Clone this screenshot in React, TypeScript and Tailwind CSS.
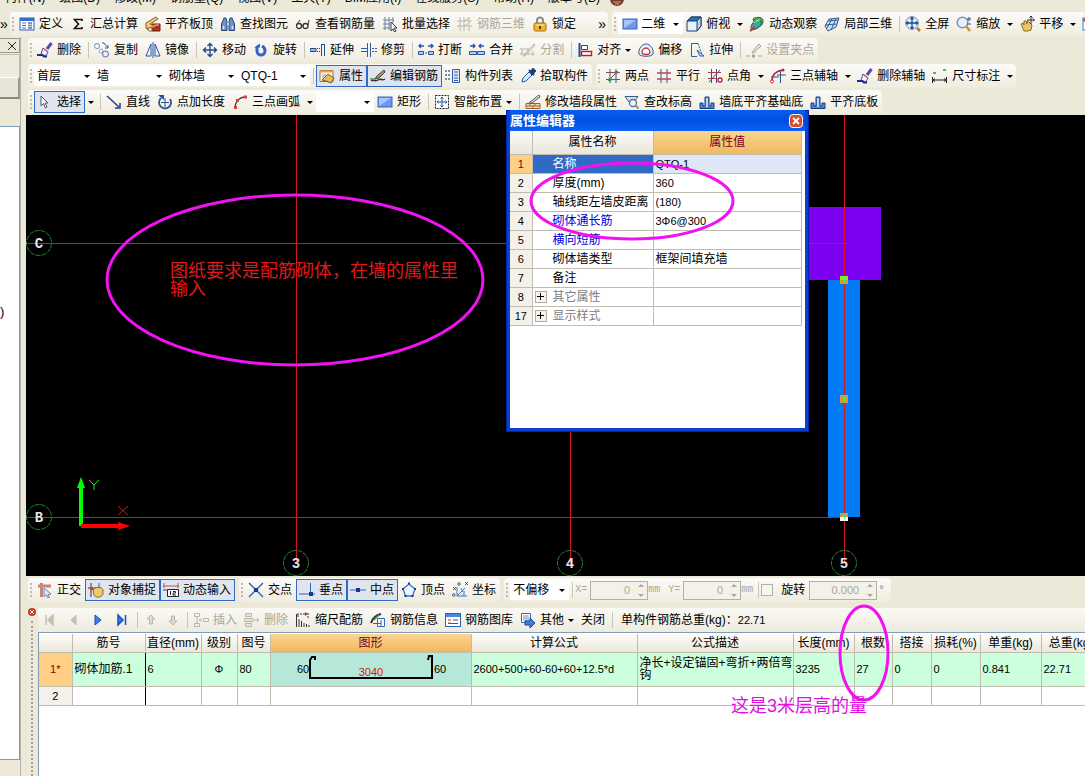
import type { ReactNode } from "react";

/* ─────────── Icons (16x16) ─────────── */
const glyphs: Record<string, ReactNode> = {
  define: (
    <>
      <rect x="1" y="2" width="14" height="12" fill="#fff" stroke="#2f5fae" />
      <path d="M1 3.500h14" stroke="#2f6fd0" strokeWidth="3" />
      <path d="M3 7h4M3 9.500h4M3 12h4" stroke="#4a6fb0" />
      <path d="M9 7h4M9 9.500h4M9 12h4" stroke="#7d93bd" strokeWidth="2" />
    </>
  ),
  sum: <path d="M12 5V3.500H4.500L8.500 8l-4 4.500H12V11" fill="none" stroke="#111" strokeWidth="1.600" />,
  alignTop: (
    <>
      <path d="M7 8h8v7H7z" fill="#b03020" stroke="#6b2015" />
      <path d="M1 7 11 1l2 2-8 5 3 1-5 5-2-2z" fill="#f7c878" stroke="#8a5a20" />
      <path d="m3 13 8-4 3 0" stroke="#f0a060" strokeWidth="1.500" fill="none" />
      <path d="M2 12h5v3H4z" fill="#fff" stroke="#8a5a20" />
    </>
  ),
  find: (
    <>
      <path d="M1.500 14.500V8L4 2h2l1 4v8.500zM14.500 14.500V8L12 2h-2L9 6v8.500z" fill="#6f93c8" stroke="#27477e" />
      <path d="M7 8h2M3.500 10v3M12.500 10v3" stroke="#dbe7fa" strokeWidth="1.500" />
    </>
  ),
  glasses: (
    <>
      <circle cx="4" cy="10" r="2.500" fill="#fff" stroke="#333" strokeWidth="1.300" />
      <circle cx="10.500" cy="10" r="2.500" fill="#fff" stroke="#333" strokeWidth="1.300" />
      <path d="M6.500 9.500h1.500M2 8 5 4M13 9l1-5" stroke="#333" fill="none" />
    </>
  ),
  batch: (
    <>
      <path d="M1 4h11M1 8h7M1 12h7M3 1v13M7 1v13M11 1v6" stroke="#6d7f9e" fill="none" />
      <path d="m9 6 6 6-3 0 2 3-1.500 1L11 13l-2 2z" fill="#fff" stroke="#2d3d5c" />
    </>
  ),
  rebar3d: <path d="M0 5h15M0 10h15M3 1v14M7 1v14M12 1v14M7 5l5-3M7 10l5-3" stroke="#bdb9aa" fill="none" />,
  lock: (
    <>
      <path d="M5 8V4.500a3 3 0 0 1 6 0V8" fill="none" stroke="#8d8d8d" strokeWidth="2" />
      <rect x="2" y="7" width="12" height="8" rx="1.500" fill="#f3b52c" stroke="#a86c10" />
      <path d="M4 9h8" stroke="#fde6a0" />
      <path d="M8 10v3" stroke="#5f3d08" strokeWidth="2" />
    </>
  ),
  plane: (
    <>
      <rect x="1" y="3" width="14" height="10" fill="#6d97ec" stroke="#3c64c0" />
      <path d="M2 4h12L2 12z" fill="#a9c4fb" />
    </>
  ),
  cube: (
    <>
      <path d="M1 5 5 1h10v9l-4 5H1z" fill="#e8f1fb" stroke="#173f6e" />
      <path d="M1 5 5 1h10l-4 4z" fill="#2d6fa8" stroke="#173f6e" />
      <path d="M11 5v10l4-5V1z" fill="#b7d2ea" stroke="#173f6e" />
    </>
  ),
  orbit: (
    <>
      <path d="M4 3c4-3 11-2 10 3s-5 5-7 4z" fill="#45b345" stroke="#186a26" />
      <ellipse cx="7" cy="9" rx="6" ry="3.500" transform="rotate(-40 7 9)" fill="#3aa7a0" stroke="#1d5e7a" />
      <path d="m1 15 5-4" stroke="#c03028" strokeWidth="2" />
      <path d="M5 7c2-2 4-3 6-3" stroke="#d9f5c9" fill="none" />
    </>
  ),
  local3d: (
    <>
      <path d="M1 10 5 3l10-1-3 9-8 4z" fill="#cfe0f4" stroke="#2d5b94" />
      <path d="m3 12 5-9M7 14l5-11M1.500 9l11-1M4 5l10-1" stroke="#2d5b94" />
    </>
  ),
  fit: (
    <>
      <circle cx="7" cy="7" r="6.300" fill="#e3effc" stroke="#6c86a8" />
      <path d="M7 1.500v11M1.500 7h11M5.500 3 7 1.500 8.500 3M5.500 11 7 12.500 8.500 11M3 5.500 1.500 7 3 8.500M11 5.500 12.500 7 11 8.500" stroke="#164b9c" strokeWidth="1.300" fill="none" />
      <path d="m12 12 3 3" stroke="#b07a28" strokeWidth="2.500" />
    </>
  ),
  zoom: (
    <>
      <circle cx="6.500" cy="6.500" r="5.300" fill="#e4f0fc" stroke="#8495ab" strokeWidth="1.500" />
      <path d="m10 10 4 5" stroke="#c99332" strokeWidth="2.500" />
      <path d="M11 3h4M13 1v4M11 8h4" stroke="#2050a8" />
    </>
  ),
  pan: (
    <>
      <path d="M2 8l2-1 1 2V5l2 0 1 3 0-3 2 1 3 3-1 5-3 1H5z" fill="#e9c46a" stroke="#94691c" />
      <path d="M12 0v8M8 4h7M10.500 1.500 12 0l1.500 1.500M14 2.500 15.500 4 14 5.500" stroke="#333" fill="none" />
    </>
  ),
  book: (
    <>
      <rect x="1" y="2" width="14" height="12" fill="#fff" stroke="#2b83c8" />
      <path d="M1 4h14" stroke="#e0492c" strokeWidth="3" />
    </>
  ),
  brush: (
    <>
      <path d="M14.500 1 10 7" stroke="#5d4aa4" strokeWidth="3" />
      <path d="m6 6 5 4-2 4-5-2z" fill="#f2efff" stroke="#4c5890" />
      <path d="m7 7 4 3" stroke="#c9694f" strokeWidth="1.500" />
      <path d="M0 13h5l2 1.500h3" stroke="#1b2c8a" strokeWidth="1.800" fill="none" />
    </>
  ),
  copy: (
    <>
      <circle cx="3" cy="4" r="2.500" fill="#fff" stroke="#7689a8" />
      <circle cx="7" cy="9" r="2" fill="#fff" stroke="#9aa7bb" />
      <circle cx="11.500" cy="12" r="3" fill="#e8eefc" stroke="#54709f" />
      <path d="M8 1h2l4 5M14 3v3h-3" fill="none" stroke="#4b5f86" />
    </>
  ),
  mirror: (
    <>
      <path d="M6 2v12H1zM10 2v12h5z" fill="#f4f8ff" stroke="#2755a4" />
      <path d="M8 0v16" stroke="#2755a4" />
    </>
  ),
  move: <path d="M8 1.500v13M1.500 8h13M5.500 4 8 1.500 10.500 4M5.500 12 8 14.500l2.500-2.500M4 5.500 1.500 8 4 10.500M12 5.500 14.500 8 12 10.500" fill="none" stroke="#274b86" strokeWidth="1.400" />,
  rotate: (
    <>
      <path d="M4 5v4a4 4 0 0 0 8 0c0-2-1-4-3-5" fill="none" stroke="#3562c8" strokeWidth="3" />
      <path d="M1 5.500h6V1.500z" fill="#3562c8" />
    </>
  ),
  extend: (
    <>
      <path d="M0 6.500h6v3H0z" fill="#9ab7e6" stroke="#244a8c" />
      <path d="M7 6.500h5M7 9.500h5" stroke="#333" strokeDasharray="1 1" />
      <path d="M11.500 2v12M14.500 2v12M11.500 2.500h3" stroke="#244a8c" />
    </>
  ),
  trim: (
    <>
      <path d="M0 6.500h6M0 9.500h6M6.500 1v14M9.500 1v14" stroke="#2860b0" fill="none" />
      <path d="M11 6.500h5M11 9.500h5" stroke="#2860b0" strokeDasharray="2 1" />
    </>
  ),
  breakUp: (
    <>
      <path d="M1 4h5M3 2 1 4l2 2M10 4h5M13 2l2 2-2 2" stroke="#2656a8" strokeWidth="1.300" fill="none" />
      <path d="M.5 9.500h5v3h-5zM10.500 9.500h5v3h-5z" fill="#b9cdec" stroke="#2656a8" />
      <path d="M7 11h2" stroke="#2656a8" />
    </>
  ),
  merge: (
    <>
      <path d="M1 4h5M4 2l2 2-2 2M10 4h5M12 2l-2 2 2 2" stroke="#2656a8" strokeWidth="1.300" fill="none" />
      <path d="M.5 9.500h7v3h-7zM8.500 9.500h7v3h-7z" fill="#b9cdec" stroke="#2656a8" />
    </>
  ),
  split: <path d="M0 7h9M0 12h14M2 7v5M8 7v5M13 9v5M3 14 14 2l1 1L5 14z" stroke="#b9b5a6" fill="none" />,
  align: (
    <>
      <path d="M2.500 1v14" stroke="#1b4c9c" strokeWidth="2" />
      <path d="M4.500 3.500h6v4h-6z" fill="#fff" stroke="#1b4c9c" />
      <path d="M4.500 9.500h10v4h-10z" fill="#fff" stroke="#c01c2c" strokeWidth="1.400" />
    </>
  ),
  offset: (
    <>
      <path d="M1 12C0 7 4 2 8 2s8 5 7 10c-1 3-13 3-14 0z" fill="#e8f0ff" stroke="#2f5796" />
      <path d="M4 11c0-3 2-5 4-5s4 2 4 5c-1 2-7 2-8 0z" fill="#fff" stroke="#c03038" strokeWidth="1.300" />
    </>
  ),
  stretch: (
    <>
      <path d="M9 1.500H2.500v13H8" fill="none" stroke="#2d5fa8" />
      <path d="M9 1.500 13 13" stroke="#2d5fa8" strokeDasharray="2 1" />
      <path d="m8 8 3 6h4z" fill="#cfe0fb" stroke="#2d5fa8" />
    </>
  ),
  grip: (
    <>
      <path d="M0 14h4M12 14h4" stroke="#a8a496" />
      <path d="M6 12.500h3v3H6z" fill="#a8a496" />
      <path d="m7 9 6-7 2 2-6 6-3 1z" fill="#e4e1d4" stroke="#a8a496" />
    </>
  ),
  props: (
    <>
      <path d="M1 2.500h13v11H1z" fill="#fff" stroke="#a07028" />
      <path d="M1 3.500h13" stroke="#e9a23c" strokeWidth="2" />
      <path d="M3 12 9 6l6 4-3 5-5-2z" fill="#e6bd55" stroke="#7a5a14" />
      <path d="M3 7h4M3 9h3" stroke="#7d8fb0" />
    </>
  ),
  editBar: (
    <>
      <path d="M1 13c3-2 4 1 7-1s4 1 7-1" fill="none" stroke="#333" strokeWidth="1.500" />
      <path d="m5 11 2-3 7-6 1 2-6 6z" fill="#a89878" stroke="#4a4028" />
      <path d="M0 11h5" stroke="#3aa05a" strokeWidth="1.500" />
    </>
  ),
  list: (
    <>
      <path d="M0 3h5M0 7h5M0 11h5" stroke="#7b8ba8" strokeWidth="2" strokeDasharray="2 1" />
      <path d="M7.500 1.500h7v13h-7z" fill="#dfe9fb" stroke="#2c5db0" />
      <path d="M9 4h4M9 7h4M9 10h4M9 12.500h4" stroke="#2c5db0" />
    </>
  ),
  picker: (
    <>
      <path d="m2 14 1-4 6-6 3 3-6 6z" fill="#d9ebfb" stroke="#2858a0" />
      <path d="m9 2 5 5M11 4l2-3 2 2-3 3z" stroke="#173a80" strokeWidth="2" fill="#173a80" />
    </>
  ),
  twoPoint: (
    <>
      <path d="M5 1v14M11 1v14" stroke="#3c50a0" fill="none" />
      <path d="M1 4.500h14M1 11.500h14" stroke="#a03c4c" fill="none" />
      <path d="M3 13 13 3" stroke="#555" />
      <path d="M3.500 10h3v3h-3zM9.500 3h3v3h-3z" fill="#3c9a3c" />
    </>
  ),
  parallel: (
    <>
      <path d="M5 1v14M11 1v14" stroke="#3c50a0" />
      <path d="M1 5h14M1 11h14" stroke="#b04858" strokeWidth="1.300" />
    </>
  ),
  pointAngle: (
    <>
      <path d="M4.500 1v14M9.500 1v14" stroke="#3c50a0" fill="none" />
      <path d="M1 4.500h13M1 10.500h9" stroke="#a03c4c" fill="none" />
      <path d="M2 14 13 2" stroke="#555" />
      <circle cx="13" cy="12" r="2" fill="#fff" stroke="#d02020" strokeWidth="1.400" />
    </>
  ),
  arcAxis: (
    <>
      <path d="M2 13c0-6 4-10 11-11" fill="none" stroke="#b02c3c" strokeWidth="1.500" />
      <path d="M7 7h9M10.500 3v12M1 9h8" stroke="#34508c" />
      <circle cx="2" cy="13.500" r="1.500" fill="#fff" stroke="#d02020" />
      <circle cx="13" cy="2" r="1.500" fill="#d02020" />
    </>
  ),
  dimension: (
    <>
      <path d="M1 4h3v2H1zM11 1h3v2h-3z" fill="#5fae5a" />
      <path d="M.5 9v6M14.500 9v6M1 12h13M3 10.500 1 12l2 1.500M12 10.500l2 1.500-2 1.500" stroke="#222" fill="none" />
    </>
  ),
  pointer: <path d="M4 2v10l2.500-2.500L8.500 14l1.500-1-2-4h3z" fill="#fff" stroke="#47597d" />,
  line: (
    <>
      <path d="m1 2 12 11" stroke="#1e3f86" strokeWidth="1.500" />
      <path d="M14 9v5H9" fill="none" stroke="#1e3f86" strokeWidth="1.500" />
    </>
  ),
  pointLength: (
    <>
      <path d="M4 4a6 6 0 1 0 9 1" fill="none" stroke="#2c4f96" strokeWidth="1.800" />
      <path d="M8 4v9M4 8.500h8" stroke="#2c4f96" />
      <path d="M1 1h6v5z" fill="#2c4f96" />
    </>
  ),
  arc: (
    <>
      <path d="M3 14C3 8 7 3 14 3" fill="none" stroke="#444" strokeWidth="1.300" />
      <path d="M2 12h3v3H2zM4 5h3v3H4zM12 1.500h3v3h-3z" fill="#d84040" />
    </>
  ),
  smart: (
    <>
      <rect x="1.500" y="1.500" width="13" height="13" fill="#fff" stroke="#222" strokeDasharray="2 1" />
      <path d="M8 3v10M3 8h10M6.500 4.500 8 3l1.500 1.500M6.500 11.500 8 13l1.500-1.500M4.500 6.500 3 8l1.500 1.500M11.500 6.500 13 8l-1.500 1.500" fill="none" stroke="#27529c" />
    </>
  ),
  editWall: (
    <>
      <path d="M1 9.500h14v5H1zM1 12h14M5 9.500V12M10 9.500V12M8 12v2.500" fill="#f6dcb0" stroke="#a0602c" />
      <path d="M4 9 14 1l1 2-8 6z" fill="#ddd" stroke="#555" />
    </>
  ),
  checkHeight: (
    <>
      <path d="M1 2.500h13L10 8H5z" fill="#d5e2f6" stroke="#40587f" />
      <circle cx="9" cy="9" r="3.500" fill="#eef5ff" stroke="#596f92" strokeWidth="1.300" />
      <path d="m11.500 11.500 3 3" stroke="#b88838" strokeWidth="2" />
    </>
  ),
  wallBase: (
    <>
      <path d="M1 14.500V9h3v3h2V3h4v9h2V9h3v5.500z" fill="#4f86cf" stroke="#163f80" />
      <path d="M7 4h2v9H7z" fill="#bcd5f5" />
    </>
  ),
  ortho: (
    <>
      <path d="M1 4h13M4.500 1v14" stroke="#c9867c" strokeWidth="3" />
      <path d="m7 6 7 6-3 .5 1.500 3L11 16l-1.500-3L7 14.500z" fill="#dce8fa" stroke="#7085a8" />
    </>
  ),
  snap: (
    <>
      <path d="M0 6h10M3 1v14" stroke="#333" />
      <path d="M5 8c1-3 9-4 10 0v4c-1 4-8 4-9 1z" fill="#edc86c" stroke="#94691c" />
      <path d="M2 5h3v3H2z" fill="#d04040" />
      <path d="M11 1v5" stroke="#2d5fa8" />
    </>
  ),
  dynInput: (
    <>
      <path d="M0 4h16M1 1v5M15 1v5" stroke="#c05050" />
      <path d="M4.500 7.500h11v7h-11z" fill="#fff" stroke="#222" />
      <path d="M7.500 9v4M10 9.500h2.500V11H10v2h3" fill="none" stroke="#222" />
      <path d="M0 8h4" stroke="#444" />
    </>
  ),
  cross: (
    <>
      <path d="m1 1 14 14M15 1 1 15" stroke="#2d5fb4" strokeWidth="1.300" />
      <path d="M6 6h4v4H6z" fill="#153a8c" />
    </>
  ),
  perpendicular: (
    <>
      <path d="M0 12h16M11.500 1v11" stroke="#2d66c0" />
      <path d="M10 10h4v4h-4z" fill="#153a8c" />
    </>
  ),
  midpoint: (
    <>
      <path d="M0 8h16" stroke="#2d66c0" />
      <path d="M6 6h4v4H6z" fill="#153a8c" />
    </>
  ),
  vertex: (
    <>
      <path d="m8 2 6 5-2.500 7h-7L2 7z" fill="#eef5ff" stroke="#3975cc" strokeWidth="1.300" />
      <path d="M7 .5h2v2H7zM1 6h2v2H1zM13 6h2v2h-2zM3.500 13h2v2h-2zM10.500 13h2v2h-2z" fill="#153a8c" />
    </>
  ),
  coord: (
    <>
      <path d="M5 5v9h10M5 14l8-8M9 6l2 4M12 9v5" fill="none" stroke="#3975cc" />
      <path d="m1 5 3 3M4 5 1 8M13 0l3 3M16 0l-3 3" stroke="#333" strokeWidth=".8" />
      <circle cx="7" cy="2" r="1.300" fill="none" stroke="#333" strokeWidth=".8" />
      <circle cx="1.800" cy="13" r="1.300" fill="none" stroke="#333" strokeWidth=".8" />
    </>
  ),
  first: <path d="M4 3v10M11 3 6 8l5 5z" fill="#c4c0b4" stroke="#c4c0b4" strokeWidth="1.500" />,
  prev: <path d="M10 3 5 8l5 5z" fill="#c4c0b4" stroke="#c4c0b4" />,
  next: <path d="m5 3 6 5-6 5z" fill="#3c7cf0" stroke="#1c4cc0" />,
  last: <path d="m4 3 5 5-5 5zM11.500 3v10" fill="#3c7cf0" stroke="#1c4cc0" strokeWidth="1.500" />,
  up: <path d="m8 3 4 4H9.500v5h-3V7H4z" fill="#dedbd0" stroke="#b9b5a8" />,
  down: <path d="m8 13 4-4H9.500V4h-3v5H4z" fill="#dedbd0" stroke="#b9b5a8" />,
  insert: <path d="M1.500 1.500h5v3h-5zM1.500 11.500h5v3h-5zM4 5v6M6 8h3M8 6.500 6.500 8 8 9.500M10.500 6.500h5v3h-5z" fill="none" stroke="#b9b5a8" />,
  remove: <path d="M1.500 1.500h6v3h-6zM0 6.500h9v3H0zM1.500 11.500h6v3h-6zM10 8h5M13 6l2 2-2 2" fill="#e8e5da" stroke="#b9b5a8" />,
  scaleBar: (
    <>
      <path d="M1.500 2v13M4 7v8M6.500 9v6M9 11v4M11.500 12v3M14 13v2" stroke="#333" />
      <path d="M2 2h9M3 5V2M13 1v5" stroke="#333" strokeDasharray="2 1" />
      <path d="M10 0l3 2-3 2z" fill="#c03030" />
    </>
  ),
  barInfo: (
    <>
      <path d="M1 11C3 5 6 3 11 2" stroke="#333" strokeWidth="2" fill="none" />
      <path d="m4 8 5-5" stroke="#48a048" strokeWidth="1.500" />
      <path d="M7.500 6.500h7v8h-7z" fill="#fff" stroke="#3468b0" />
      <path d="M3 11.500h8M11 8v6" stroke="#3468b0" />
    </>
  ),
  barLib: (
    <>
      <rect x=".5" y="1.500" width="15" height="13" fill="#fff" stroke="#2c62b8" />
      <path d="M1 3.500h14" stroke="#4b88dc" strokeWidth="3" />
      <path d="M3 8h3M8 8h5M3 11.500h10" stroke="#555" />
      <path d="M3 11h3" stroke="#d05040" />
    </>
  ),
  other: (
    <>
      <path d="M1.500 1.500h9v9h-9z" fill="#fff" stroke="#3468b0" />
      <path d="M3 4h6M3 6h6M3 8h6" stroke="#6b8bc4" />
      <path d="M5 9h5V6l5 5-5 5v-3H5z" fill="#3f7be0" stroke="#1b458c" />
    </>
  ),
};

const Icon = ({ name }: { name: string }) => (
  <svg width="16" height="16" viewBox="0 0 16 16" className="shrink-0" aria-hidden="true">
    {glyphs[name]}
  </svg>
);

const Caret = () => (
  <svg width="6" height="3" viewBox="0 0 6 3" className="shrink-0" aria-hidden="true">
    <path d="M0 0h6L3 3z" fill="#000" />
  </svg>
);

/* ─────────── Toolbar parts ─────────── */
const Bar = ({ children, grow }: { children: ReactNode; grow?: boolean }) => (
  <div
    className={`flex h-6 items-center rounded bg-gradient-to-b from-[#fcfbf8] to-[#efecdf] ${
      grow ? "min-w-0 flex-1 overflow-hidden" : "shrink-0"
    }`}
  >
    <span className="mx-0.5 h-3.5 shrink-0 border-l-2 border-dotted border-[#bfbba8]" />
    {children}
  </div>
);

const Sep = () => <span className="mr-0.5 ml-[3px] h-4 w-px shrink-0 bg-[#c9c5b4]" />;

interface ToolProps {
  icon?: string;
  label: string;
  active?: boolean;
  disabled?: boolean;
  menu?: boolean;
}

const Tool = ({ icon, label, active, disabled, menu }: ToolProps) => (
  <button
    type="button"
    disabled={disabled}
    className={`flex h-[22px] shrink-0 items-center gap-1 border pr-[3px] pl-0.5 ${
      active ? "border-[#316ac5] bg-[#dfe4ee]" : "border-transparent"
    } ${disabled ? "text-[#aca899]" : "text-black"}`}
  >
    {icon && <Icon name={icon} />}
    {label}
    {menu && <Caret />}
  </button>
);

const NavTool = ({ icon, label, narrow }: { icon: string; label: string; narrow?: boolean }) => (
  <button
    type="button"
    aria-label={label}
    className={`flex h-[22px] shrink-0 items-center justify-center ${narrow ? "w-[22px]" : "w-6"}`}
  >
    <Icon name={icon} />
  </button>
);

const DropArrow = ({ label }: { label: string }) => (
  <button type="button" aria-label={label} className="flex h-[22px] w-3 shrink-0 items-center justify-center">
    <Caret />
  </button>
);

const Combo = ({ value, label, width, icon }: { value: string; label: string; width: string; icon?: string }) => (
  <label className={`relative flex h-5 shrink-0 items-center bg-white ${width}`}>
    {icon && (
      <span className="pl-1">
        <Icon name={icon} />
      </span>
    )}
    <select aria-label={label} className="h-5 w-full appearance-none bg-transparent pl-[3px] text-xs outline-none">
      <option>{value}</option>
    </select>
    <span className="pointer-events-none absolute right-1 flex">
      <Caret />
    </span>
  </label>
);

const Spin = ({ value, label, width }: { value: string; label: string; width: string }) => (
  <span className={`flex h-[19px] shrink-0 items-center border border-[#b5b1a0] bg-[#f3f1e8] ${width}`}>
    <input
      aria-label={label}
      defaultValue={value}
      disabled
      className="w-full min-w-0 pr-2 text-right text-[11px] text-[#aca899]"
    />
    <svg width="6" height="15" viewBox="0 0 6 15" className="mr-[3px] shrink-0" aria-hidden="true">
      <path d="M0 4h6L3 1zM0 11h6l-3 3z" fill="#aca899" />
    </svg>
  </span>
);

/* ─────────── Data ─────────── */
const menus = [
  "楼层(L)",
  "构件(N)",
  "绘图(D)",
  "修改(M)",
  "钢筋量(Q)",
  "视图(V)",
  "工具(T)",
  "BIM应用(I)",
  "在线服务(S)",
  "帮助(H)",
  "版本号(B)",
];

interface Prop {
  no: number;
  name: string;
  value?: string;
  kind?: "blue" | "group";
}

const props: Prop[] = [
  { no: 1, name: "名称", value: "QTQ-1" },
  { no: 2, name: "厚度(mm)", value: "360" },
  { no: 3, name: "轴线距左墙皮距离", value: "(180)" },
  { no: 4, name: "砌体通长筋", value: "3Φ6@300", kind: "blue" },
  { no: 5, name: "横向短筋", kind: "blue" },
  { no: 6, name: "砌体墙类型", value: "框架间填充墙" },
  { no: 7, name: "备注" },
  { no: 8, name: "其它属性", kind: "group" },
  { no: 17, name: "显示样式", kind: "group" },
];

const columns = [
  "筋号",
  "直径(mm)",
  "级别",
  "图号",
  "图形",
  "计算公式",
  "公式描述",
  "长度(mm)",
  "根数",
  "搭接",
  "损耗(%)",
  "单重(kg)",
  "总重(kg)",
];

/* ─────────── Drawing area ─────────── */
const axes = [
  { x: 13, y: 128, name: "C" },
  { x: 13, y: 402, name: "B" },
  { x: 270, y: 448, name: "3" },
  { x: 544, y: 448, name: "4" },
  { x: 818, y: 448, name: "5" },
];

const Drawing = () => (
  <svg className="absolute inset-0 h-full w-full" aria-label="平面图">
    <rect x="745" y="92" width="110" height="73" fill="#7d00f0" />
    <rect x="802" y="165" width="32" height="237" fill="#007af5" />
    <g fill="#d8141c">
      <rect x="270" y="0" width="1" height="448" />
      <rect x="544" y="0" width="1" height="448" />
      <rect x="818" y="0" width="1" height="448" />
      <rect x="0" y="128" width="821" height="1" />
      <rect x="0" y="402" width="818" height="1" />
    </g>
    {axes.map((a) => (
      <g key={a.name}>
        <circle cx={a.x} cy={a.y} r="12.500" fill="none" stroke="#1f8a2c" strokeDasharray="5 1" />
        <text
          x={a.x}
          y={a.y + 5}
          textAnchor="middle"
          fill="#e4e4e4"
          className="font-['Liberation_Mono',monospace] text-sm font-bold"
        >
          {a.name}
        </text>
      </g>
    ))}
    <path d="M814 161h8v4h-8z" fill="#7cf01c" />
    <path d="M814 165h8v4h-8zM814 280h8v8h-8zM814 398h8v4h-8z" fill="#d99a2c" />
    <path d="M814 402h8v4h-8z" fill="#fff" />
    <path d="M818.500 163v5M818.500 281v6M818.500 399v5" stroke="#5fe07a" />
    <path d="M55 411v-40" stroke="#00ff00" strokeWidth="4" />
    <path d="m51 373 4-11 4 11z" fill="#00ff00" />
    <path d="M55 411h40" stroke="#ff0000" strokeWidth="4" />
    <path d="m92 407 12 4-12 4z" fill="#ff0000" />
    <path d="m63 365 5 5 5-5M68 370v5" fill="none" stroke="#30e030" />
    <path d="m92 391 10 9M102 391l-10 9" stroke="#c02020" />
  </svg>
);

const PropertyDialog = () => (
  <section className="absolute -top-[5px] left-[480px] flex h-[322px] w-[303px] flex-col bg-[#0a3fd0] px-1 pb-1 shadow-[inset_0_0_0_1px_#0024a8]">
    <header className="flex h-[21px] shrink-0 items-center justify-between bg-gradient-to-b from-[#0a5cf0] via-[#0050e0] to-[#0a62f8] text-white">
      <h2 className="text-[13px] leading-4 font-bold">属性编辑器</h2>
      <button
        type="button"
        aria-label="关闭属性编辑器"
        className="mr-0.5 flex h-3.5 w-3.5 items-center justify-center rounded-sm border border-white bg-[#dc4a26]"
      >
        <svg width="8" height="8" viewBox="0 0 8 8">
          <path d="m1 1 6 6M7 1 1 7" stroke="#fff" strokeWidth="1.800" />
        </svg>
      </button>
    </header>
    <div className="flex-1 bg-white pr-[3px]">
      <table className="w-full table-fixed border-collapse text-left leading-4">
        <colgroup>
          <col className="w-[22px]" />
          <col className="w-[121px]" />
          <col />
        </colgroup>
        <thead>
          <tr className="h-[23px] bg-gradient-to-b from-[#fbfaf7] to-[#e9e6da] text-center">
            <th className="border-r border-b border-[#c0bdb0]" />
            <th className="border-r border-b border-[#c0bdb0] text-center font-normal">属性名称</th>
            <th className="border-r border-b border-[#c0bdb0] bg-gradient-to-b from-[#fbd492] to-[#efb85c] text-center font-normal text-[#7a0020]">
              属性值
            </th>
          </tr>
        </thead>
        <tbody>
          {props.map((p) => (
            <tr key={p.no} className="h-[19px]">
              <td
                className={`border-r border-b border-[#c0bdb0] text-center text-[11px] ${
                  p.no === 1 ? "bg-[#ffcf85] text-[#7a0020]" : "bg-[#f3f1ea]"
                }`}
              >
                {p.no}
              </td>
              <td
                className={`relative border-r border-b border-[#c0bdb0] pl-5 whitespace-nowrap ${
                  p.no === 1
                    ? "bg-[#316ac5] text-white"
                    : p.kind === "blue"
                      ? "text-[#0000d8]"
                      : p.kind === "group"
                        ? "text-[#808080]"
                        : ""
                }`}
              >
                {p.kind === "group" && (
                  <button
                    type="button"
                    aria-label={`展开${p.name}`}
                    className="absolute top-[3px] left-0.5 flex h-3 w-3 items-center justify-center border border-[#b0ada0] bg-[#f4f3ee]"
                  >
                    <svg width="7" height="7" viewBox="0 0 7 7">
                      <path d="M0 3.500h7M3.500 0v7" stroke="#000" />
                    </svg>
                  </button>
                )}
                {p.name}
              </td>
              <td
                className={`border-r border-b border-[#c0bdb0] pl-0.5 ${p.no === 1 ? "bg-[#dfe6f5]" : ""} ${
                  p.no === 6 ? "" : "text-[11px]"
                }`}
              >
                {p.value}
              </td>
            </tr>
          ))}
        </tbody>
      </table>
    </div>
  </section>
);

/* ─────────── Rebar table ─────────── */
const BarShape = () => (
  <svg width="200" height="33" viewBox="0 0 200 33" className="block text-[11px]">
    <path d="M44 7V4h-3l-2 3v18h122V3h-3l-1 4" fill="none" stroke="#000" strokeWidth="2" />
    <text x="26" y="20">
      60
    </text>
    <text x="100" y="23" textAnchor="middle" fill="#e01010">
      3040
    </text>
    <text x="163" y="20">
      60
    </text>
  </svg>
);

const cell = "border-r border-b border-[#c0bdb0] px-0.5";

const RebarTable = () => (
  <table className="w-[1062px] shrink-0 table-fixed border-collapse text-left leading-4">
    <colgroup>
      <col className="w-[33px]" />
      <col className="w-[73px]" />
      <col className="w-[56px]" />
      <col className="w-[36px]" />
      <col className="w-[33px]" />
      <col className="w-[201px]" />
      <col className="w-[166px]" />
      <col className="w-[156px]" />
      <col className="w-[61px]" />
      <col className="w-[38px]" />
      <col className="w-[39px]" />
      <col className="w-[49px]" />
      <col className="w-[61px]" />
      <col className="w-[60px]" />
    </colgroup>
    <thead>
      <tr className="h-[18px] bg-gradient-to-b from-[#fdfcfa] to-[#ebe8dc]">
        <th className={cell} />
        {columns.map((c) => (
          <th
            key={c}
            className={`border-r border-b border-[#c0bdb0] text-center font-normal whitespace-nowrap ${
              c === "图形" ? "bg-gradient-to-b from-[#fbd492] to-[#efb85c] text-[#7a0020]" : ""
            }`}
          >
            {c}
          </th>
        ))}
      </tr>
    </thead>
    <tbody>
      <tr className="h-[34px] bg-[#ccffdc] text-[11px]">
        <td className={`${cell} bg-[#ffcf85] text-center text-[#7a0020]`}>1*</td>
        <td className="border-r border-b border-r-black border-b-[#c0bdb0] px-0.5 text-xs whitespace-nowrap">砌体加筋.1</td>
        <td className={cell}>6</td>
        <td className={`${cell} text-center`}>Φ</td>
        <td className={cell}>80</td>
        <td className="border-r border-b border-[#c0bdb0] bg-[#b5e8d8] p-0">
          <BarShape />
        </td>
        <td className={`${cell} whitespace-nowrap`}>2600+500+60-60+60+12.5*d</td>
        <td className={`${cell} text-xs leading-3 whitespace-nowrap`}>
          净长+设定锚固+弯折+两倍弯
          <br />钩
        </td>
        <td className={cell}>3235</td>
        <td className={cell}>27</td>
        <td className={cell}>0</td>
        <td className={cell}>0</td>
        <td className={cell}>0.841</td>
        <td className={cell}>22.71</td>
      </tr>
      <tr className="h-[19px] text-[11px]">
        <td className={`${cell} bg-[#f3f1ea] text-center`}>2</td>
        <td className="border-r border-b border-r-black border-b-[#c0bdb0]" />
        {columns.slice(1).map((c) => (
          <td key={c} className={cell} />
        ))}
      </tr>
    </tbody>
  </table>
);

/* ─────────── Page ─────────── */
const App = () => {
  return (
    <div className="flex h-screen flex-col overflow-hidden bg-[#ece9d8] font-['Liberation_Sans','Noto_Sans_CJK_SC',sans-serif] text-xs whitespace-nowrap text-black">
      <nav className="flex h-[11px] shrink-0 items-end gap-2.5 overflow-hidden pb-[5px]">
        <span className="-ml-12 flex gap-3.5">
          {menus.map((m) => (
            <a key={m} href="#" className="leading-4">
              {m}
            </a>
          ))}
        </span>
        <svg width="14" height="14" viewBox="0 0 14 14" aria-hidden="true">
          <circle cx="7" cy="7" r="7" fill="#7a3828" />
          <path d="M3 10h8M5 12h4" stroke="#e0a080" />
        </svg>
      </nav>

      <div className="flex h-[26px] shrink-0 items-center gap-1">
        <span className="-mr-1 w-2.5 text-sm leading-4">»</span>
        <Bar>
          <Tool icon="define" label="定义" />
          <Tool icon="sum" label="汇总计算" />
          <Tool icon="alignTop" label="平齐板顶" />
          <Tool icon="find" label="查找图元" />
          <Tool icon="glasses" label="查看钢筋量" />
          <Tool icon="batch" label="批量选择" />
          <Tool icon="rebar3d" label="钢筋三维" disabled />
          <Tool icon="lock" label="锁定" />
          <span className="w-7 pr-0.5 text-right text-sm leading-4">»</span>
        </Bar>
        <Bar grow>
          <Combo icon="plane" value="二维" label="视图模式" width="w-[65px]" />
          <Tool icon="cube" label="俯视" />
          <DropArrow label="俯视选项" />
          <Tool icon="orbit" label="动态观察" />
          <Tool icon="local3d" label="局部三维" />
          <Sep />
          <Tool icon="fit" label="全屏" />
          <Tool icon="zoom" label="缩放" />
          <DropArrow label="缩放选项" />
          <Tool icon="pan" label="平移" />
          <DropArrow label="平移选项" />
          <Tool icon="book" label="" />
        </Bar>
      </div>

      <div className="flex min-h-0 flex-1">
        {/* docked panel, only its right edge is on screen */}
        <aside className="flex w-[21px] shrink-0 flex-col border-r border-[#b4b2a8]">
          <button
            type="button"
            aria-label="关闭"
            className="mt-px flex h-[15px] w-full items-center justify-center border border-l-0 border-[#9d9a8c] pl-1"
          >
            <svg width="8" height="8" viewBox="0 0 8 8">
              <path d="m0 0 8 8M8 0 0 8" stroke="#222" />
            </svg>
          </button>
          <div className="mt-px h-[23px] border-t border-r border-[#c4c1b2] bg-[#eeebde]" />
          <div className="h-[22px] border-t border-r-2 border-b-2 border-t-[#fff] border-r-[#9d9a8c] border-b-[#8a877a] bg-[#e8e5d8]" />
          <div className="mt-[27px] flex-1 border border-l-0 border-[#7f9db9] bg-white pt-[177px]">
            <span className="text-[13px] leading-4">)</span>
          </div>
          <div className="h-4" />
        </aside>

        <main className="flex min-w-0 flex-1 flex-col pl-[5px]">
          <div className="flex h-[26px] shrink-0 items-center gap-1 pl-0.5">
            <Bar>
              <Tool icon="brush" label="删除" />
              <Sep />
              <Tool icon="copy" label="复制" />
              <Tool icon="mirror" label="镜像" />
              <Sep />
              <Tool icon="move" label="移动" />
              <Tool icon="rotate" label="旋转" />
              <Sep />
              <Tool icon="extend" label="延伸" />
              <Tool icon="trim" label="修剪" />
              <Sep />
              <Tool icon="breakUp" label="打断" />
              <Tool icon="merge" label="合并" />
              <Tool icon="split" label="分割" disabled />
              <Sep />
              <Tool icon="align" label="对齐" menu />
              <Tool icon="offset" label="偏移" />
              <Tool icon="stretch" label="拉伸" />
              <Sep />
              <Tool icon="grip" label="设置夹点" disabled />
            </Bar>
          </div>

          <div className="flex h-[26px] shrink-0 items-center gap-1 pl-0.5">
            <Bar>
              <Combo value="首层" label="楼层" width="w-[60px]" />
              <Combo value="墙" label="构件类型" width="w-[72px]" />
              <Combo value="砌体墙" label="构件种类" width="w-[72px]" />
              <Combo value="QTQ-1" label="构件名称" width="w-[72px]" />
              <Sep />
              <Tool icon="props" label="属性" active />
              <Tool icon="editBar" label="编辑钢筋" active />
              <Tool icon="list" label="构件列表" />
              <Tool icon="picker" label="拾取构件" />
            </Bar>
            <Bar>
              <Tool icon="twoPoint" label="两点" />
              <Tool icon="parallel" label="平行" />
              <Tool icon="pointAngle" label="点角" />
              <DropArrow label="点角选项" />
              <Tool icon="arcAxis" label="三点辅轴" />
              <DropArrow label="三点辅轴选项" />
              <Tool icon="brush" label="删除辅轴" />
              <Tool icon="dimension" label="尺寸标注" />
              <DropArrow label="尺寸标注选项" />
            </Bar>
          </div>

          <div className="flex h-[26px] shrink-0 items-center gap-1 pl-0.5">
            <Bar>
              <Tool icon="pointer" label="选择" active />
              <DropArrow label="选择选项" />
              <Sep />
              <Tool icon="line" label="直线" />
              <Tool icon="pointLength" label="点加长度" />
              <Tool icon="arc" label="三点画弧" />
              <DropArrow label="三点画弧选项" />
              <Combo value="" label="画弧半径" width="w-[58px]" />
              <Tool icon="plane" label="矩形" />
              <Sep />
              <Tool icon="smart" label="智能布置" menu />
              <Sep />
              <Tool icon="editWall" label="修改墙段属性" />
              <Tool icon="checkHeight" label="查改标高" />
              <Tool icon="wallBase" label="墙底平齐基础底" />
              <Tool icon="wallBase" label="平齐底板" />
            </Bar>
          </div>

          <div className="relative min-h-0 flex-1 bg-black">
            <Drawing />
            <p className="absolute top-[147px] left-36 text-lg leading-[18px] text-[#e01818]">
              图纸要求是配筋砌体，在墙的属性里
              <br />
              输入
            </p>
            <PropertyDialog />
            <svg className="pointer-events-none absolute inset-0 h-full w-full" aria-hidden="true">
              <g fill="none" stroke="#f012f0" strokeWidth="3">
                <ellipse cx="269" cy="165" rx="188" ry="85" />
                <ellipse cx="606" cy="86" rx="101" ry="38" />
              </g>
            </svg>
          </div>

          <div className="flex h-7 shrink-0 items-center gap-1 pl-0.5">
            <Bar>
              <Tool icon="ortho" label="正交" />
              <Tool icon="snap" label="对象捕捉" active />
              <Tool icon="dynInput" label="动态输入" active />
            </Bar>
            <Bar>
              <Tool icon="cross" label="交点" />
              <Tool icon="perpendicular" label="垂点" active />
              <Tool icon="midpoint" label="中点" active />
              <Tool icon="vertex" label="顶点" />
              <Tool icon="coord" label="坐标" />
            </Bar>
            <Bar>
              <Combo value="不偏移" label="偏移方式" width="w-[59px]" />
              <Sep />
              <span className="w-[15px] font-['Liberation_Mono',monospace] text-[10px] text-[#aca899]">X=</span>
              <Spin value="0" label="X 偏移" width="w-[58px]" />
              <span className="w-5 font-['Liberation_Mono',monospace] text-[10px] text-[#aca899]">mm</span>
              <span className="w-[15px] font-['Liberation_Mono',monospace] text-[10px] text-[#aca899]">Y=</span>
              <Spin value="0" label="Y 偏移" width="w-[58px]" />
              <span className="w-3.5 font-['Liberation_Mono',monospace] text-[10px] text-[#aca899]">mm</span>
              <Sep />
              <label className="flex items-center gap-2">
                <input type="checkbox" className="h-3 w-3 appearance-none border border-[#b5b1a0] bg-[#f6f5ee]" />
                旋转
              </label>
              <span className="w-1" />
              <Spin value="0.000" label="旋转角度" width="w-[68px]" />
              <span className="w-3.5 pl-0.5 text-[#808080]">°</span>
            </Bar>
          </div>

          <section className="relative flex h-[172px] shrink-0 pt-1">
            <div className="flex w-3 shrink-0 flex-col items-center">
              <button type="button" aria-label="关闭钢筋表" className="h-2 w-2 rounded-sm bg-[#c83c28]">
                <svg width="8" height="8" viewBox="0 0 8 8">
                  <path d="m2 2 4 4M6 2 2 6" stroke="#fff" />
                </svg>
              </button>
              <span className="mt-[5px] flex-1 border-l-2 border-dotted border-[#a5a293]" />
            </div>
            <div className="flex min-w-0 flex-1 flex-col">
              <div className="flex h-6 shrink-0 items-center bg-gradient-to-b from-[#faf9f5] to-[#eeebde]">
                <NavTool icon="first" label="第一条" />
                <NavTool icon="prev" label="上一条" />
                <NavTool icon="next" label="下一条" />
                <NavTool icon="last" label="最后一条" />
                <Sep />
                <NavTool icon="up" label="上移" narrow />
                <NavTool icon="down" label="下移" narrow />
                <Sep />
                <Tool icon="insert" label="插入" disabled />
                <Tool icon="remove" label="删除" disabled />
                <Tool icon="scaleBar" label="缩尺配筋" />
                <Tool icon="barInfo" label="钢筋信息" />
                <Tool icon="barLib" label="钢筋图库" />
                <Tool icon="other" label="其他" menu />
                <Tool label="关闭" />
                <Sep />
                <span className="pl-1.5">
                  单构件钢筋总重(kg)：<span className="text-[11px]">22.71</span>
                </span>
              </div>
              <div className="flex min-h-0 flex-1 items-start overflow-hidden border-t border-l border-[#7f9db9] bg-white pt-px">
                <RebarTable />
              </div>
            </div>
            <svg className="pointer-events-none absolute inset-0 h-full w-full overflow-visible" aria-hidden="true">
              <ellipse cx="838" cy="49" rx="24" ry="47" fill="none" stroke="#f012f0" strokeWidth="3" />
            </svg>
            <p className="absolute top-[93px] left-[705px] text-lg leading-[18px] text-[#e010e0]">这是3米层高的量</p>
          </section>
        </main>
      </div>
    </div>
  );
};

export default App;
